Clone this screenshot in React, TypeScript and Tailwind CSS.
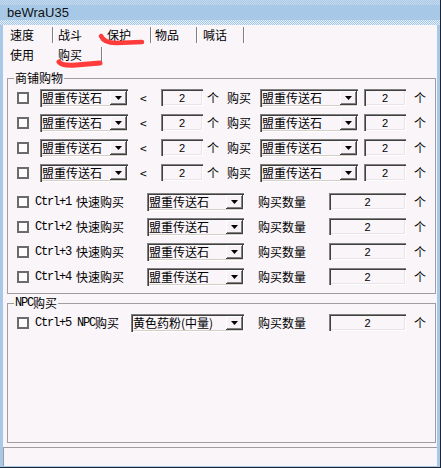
import React from "react"

const Check = () => (
    <span className="w-[12px] h-[12px] border-2 border-[#6b6b6b] bg-[#fdfdfd] shrink-0" />
)

const Arrow = () => (
    <svg width="7" height="4" viewBox="0 0 7 4">
        <polygon points="0,0 7,0 3.5,4" fill="#000" />
    </svg>
)

const Combo: React.FC<{ className: string; text: string }> = ({ className, text }) => (
    <div className={`${className} h-[18px] shrink-0 flex items-center bg-[#f9f5f9] shadow-[inset_1px_1px_0_#808080,inset_2px_2px_0_#404040,inset_-1px_-1px_0_#ffffff,inset_-2px_-2px_0_#d4d0c8]`}>
        <span className="pl-[2px] whitespace-nowrap">{text}</span>
        <span className="ml-auto mr-[1px] w-[17px] h-[14px] flex items-center justify-center pt-[1px] bg-[#f6f2f6] shadow-[inset_-1px_-1px_0_#404040,inset_1px_1px_0_#ffffff,inset_-2px_-2px_0_#808080]">
            <Arrow />
        </span>
    </div>
)

const NumBox: React.FC<{ className: string }> = ({ className }) => (
    <div className={`${className} h-[17px] shrink-0 flex items-center justify-center font-['Liberation_Sans',sans-serif] text-[11px] shadow-[inset_1px_1px_0_#808080,inset_2px_2px_0_#404040,inset_-1px_-1px_0_#ffffff,inset_-2px_-2px_0_#e8e4e8]`}>
        2
    </div>
)

const Sep: React.FC<{ className: string }> = ({ className }) => (
    <span className={`${className} w-[2px] h-[16px] border-l border-[#808080] bg-white shrink-0`} />
)

const ShopRow = () => (
    <div className="flex items-center h-[25px] pl-[9px]">
        <Check />
        <Combo className="ml-[11px] w-[88px]" text="盟重传送石" />
        <span className="ml-[12px] w-[8px]">&lt;</span>
        <NumBox className="ml-[13px] w-[42px]" />
        <span className="ml-[4px] w-[12px]">个</span>
        <span className="ml-[8px] w-[24px]">购买</span>
        <Combo className="ml-[9px] w-[98px]" text="盟重传送石" />
        <NumBox className="ml-[6px] w-[42px]" />
        <span className="ml-[8px] w-[12px]">个</span>
    </div>
)

const CtrlRow: React.FC<{ n: number }> = ({ n }) => (
    <div className="flex items-center h-[25px] pl-[9px]">
        <Check />
        <span className="ml-[6px] w-[89px] flex items-center whitespace-nowrap">
            <span className="w-[42px] font-['Liberation_Mono',monospace] text-[12px] tracking-[-1.2px]">Ctrl+{n}</span>
            <span>快速购买</span>
        </span>
        <Combo className="ml-[23px] w-[97px]" text="盟重传送石" />
        <span className="ml-[14px] w-[48px]">购买数量</span>
        <NumBox className="ml-[23px] w-[77px]" />
        <span className="ml-[8px] w-[12px]">个</span>
    </div>
)

export default function App() {
    return (
        <div className="relative w-[441px] h-[468px] bg-[#a7c9e7] border-r border-b border-[#1b2533] flex flex-col font-['Noto_Sans_CJK_SC','Noto_Sans',sans-serif] text-[12px] leading-[14px] text-black overflow-hidden">
            {/* title bar */}
            <div className="h-[25px] shrink-0 flex flex-col">
                <div className="h-[5px] bg-[image:repeating-conic-gradient(#c9dbec_0%_25%,#a7c9e7_0%_50%)] bg-[length:2px_2px]" />
                <div className="h-[15px] pl-[7px] font-['Liberation_Sans',sans-serif] text-[13px] leading-[15px] text-[#111]">beWraU35</div>
                <div className="flex-1 bg-[image:repeating-conic-gradient(#e2edf7_0%_25%,#a7c9e7_0%_50%)] bg-[length:2px_2px]" />
            </div>

            {/* client */}
            <div className="flex-1 mx-[3px] mb-[1px] bg-[#f9f5f9] flex flex-col">
                <div className="flex items-center h-[16px] mt-[2px] pl-[7px]">
                    <span className="w-[24px]">速度</span>
                    <Sep className="ml-[18px]" />
                    <span className="ml-[4px] w-[24px]">战斗</span>
                    <span className="ml-[25px] w-[24px]">保护</span>
                    <Sep className="ml-[19px]" />
                    <span className="ml-[3px] w-[24px]">物品</span>
                    <Sep className="ml-[17px]" />
                    <span className="ml-[5px] w-[24px]">喊话</span>
                    <Sep className="ml-[16px]" />
                </div>
                <div className="flex items-center h-[16px] mt-[4px] pl-[7px]">
                    <span className="w-[24px]">使用</span>
                    <span className="ml-[24px] w-[24px]">购买</span>
                    <Sep className="ml-[19px]" />
                </div>

                <fieldset className="mt-[8px] ml-[4px] w-[429px] border border-[#a09ca0] pb-[4px]">
                    <legend className="ml-[6px] px-[1px]">商铺购物</legend>
                    <ShopRow />
                    <ShopRow />
                    <ShopRow />
                    <ShopRow />
                    <div className="h-[4px]" />
                    <CtrlRow n={1} />
                    <CtrlRow n={2} />
                    <CtrlRow n={3} />
                    <CtrlRow n={4} />
                </fieldset>

                <fieldset className="mt-[2px] ml-[4px] w-[429px] h-[147px] border border-[#a09ca0]">
                    <legend className="ml-[6px] px-[1px] flex items-center">
                        <span className="font-['Liberation_Mono',monospace] text-[12px] tracking-[-1.2px]">NPC</span>
                        <span>购买</span>
                    </legend>
                    <div className="flex items-center h-[25px] pl-[9px]">
                        <Check />
                        <span className="ml-[6px] w-[84px] flex items-center whitespace-nowrap">
                            <span className="font-['Liberation_Mono',monospace] text-[12px] tracking-[-1.2px] whitespace-pre">Ctrl+5 NPC</span>
                            <span>购买</span>
                        </span>
                        <Combo className="ml-[12px] w-[113px]" text="黄色药粉(中量)" />
                        <span className="ml-[14px] w-[48px]">购买数量</span>
                        <NumBox className="ml-[23px] w-[77px]" />
                        <span className="ml-[8px] w-[12px]">个</span>
                    </div>
                </fieldset>

                <div className="flex-1 mt-[4px] border-t border-l border-[#a09ca0]" />
            </div>

            {/* red annotation marks */}
            <svg className="absolute inset-0 pointer-events-none" width="441" height="468" viewBox="0 0 441 468">
                <path d="M101 36 Q104 43 116 43 L142 42" stroke="#ff3b3b" strokeWidth="4.5" fill="none" strokeLinecap="round" />
                <path d="M59 62 Q62 66 76 65 L100 63" stroke="#ff3b3b" strokeWidth="5" fill="none" strokeLinecap="round" />
            </svg>
        </div>
    )
}
